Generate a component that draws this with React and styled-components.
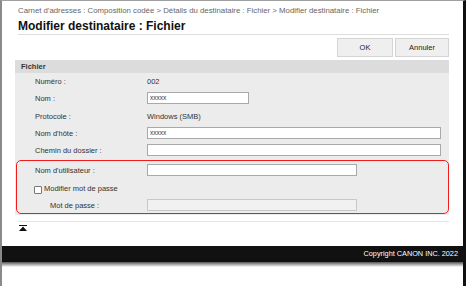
import React from 'react';
import styled, { createGlobalStyle } from 'styled-components';

const GlobalStyle = createGlobalStyle`
    html, body {
        margin: 0;
        padding: 0;
        background: #ffffff;
    }
    body {
        font-family: "Liberation Sans", Arial, sans-serif;
        color: #333;
    }
`

const Frame = styled.div`
    width: 466px;
    height: 286px;
    box-sizing: border-box;
    border-top: 1px solid #a0a0a0;
    border-left: 2px solid #8a8a8a;
    border-right: 3px solid #111;
    display: flex;
    flex-direction: column;
    overflow: hidden;
`

const Main = styled.div`
    padding: 4px 14px 0 16px;
    display: flex;
    flex-direction: column;
`

const Breadcrumb = styled.div`
    font-size: 7.8px;
    color: #666;
    line-height: 12px;
`

const Title = styled.h1`
    margin: 2px 0 0;
    font-size: 12px;
    font-weight: bold;
    color: #111;
    line-height: 15px;
    border-bottom: 1px solid #ddd;
`

const Toolbar = styled.div`
    display: flex;
    justify-content: flex-end;
    gap: 2px;
    padding: 3px 0 3px;
`

const Button = styled.button`
    width: ${({ wide }) => (wide ? '54px' : '56px')};
    height: 19px;
    background: #efefef;
    border: 1px solid #d4d4d4;
    font-family: inherit;
    font-size: 7.5px;
    color: #222;
    padding: 0;
`

const Section = styled.div`
    margin-left: -3px;
    background: #ececec;
`

const SectionHead = styled.div`
    background: #dcdcdc;
    height: 13px;
    line-height: 13px;
    font-size: 7.5px;
    font-weight: bold;
    color: #333;
    padding-left: 6px;
`

const Rows = styled.div`
    padding: 0 8px 1px 20px;
`

const Row = styled.div`
    display: flex;
    align-items: center;
    height: ${({ h }) => h || 18}px;
`

const Label = styled.div`
    width: 112px;
    flex: none;
    font-size: 7.5px;
    color: #333;
    padding-left: ${({ indent }) => indent || 0}px;
    box-sizing: border-box;
`

const Value = styled.div`
    font-size: 7.5px;
    color: #333;
`

const Input = styled.div`
    box-sizing: border-box;
    width: ${({ w }) => w}px;
    height: 12px;
    background: ${({ disabled }) => (disabled ? '#f1f1f1' : '#fff')};
    border: 1px solid ${({ disabled }) => (disabled ? '#c8c8c8' : '#a9a9a9')};
    font-size: 6.5px;
    line-height: 10px;
    padding-left: 2px;
    color: #333;
`

const Highlight = styled.div`
    margin: 1px -8px 0 -19px;
    padding: 1px 7px 2px 18px;
    border: 1px solid #f21b1b;
    border-radius: 5px;
`

const CheckRow = styled.label`
    display: flex;
    align-items: center;
    height: 21px;
    font-size: 7.5px;
    color: #333;
    margin-left: -1px;
`

const Box = styled.span`
    width: 8px;
    height: 8px;
    box-sizing: border-box;
    border: 1px solid #777;
    background: #fff;
    border-radius: 1px;
    margin-right: 2px;
    margin-top: 2px;
`

const Divider = styled.div`
    margin-top: 6px;
    height: 1px;
    background: #e4e4e4;
`

const TopLink = styled.div`
    display: flex;
    padding: 3px 0 0 1px;
    height: 10px;
    svg {
        display: block;
    }
`

const Footer = styled.div`
    margin-top: auto;
    margin-bottom: 24px;
    height: 16px;
    background: #111;
    color: #fff;
    font-size: 7.3px;
    line-height: 16px;
    text-align: right;
    padding-right: 5px;
    position: relative;
    &::after {
        content: '';
        position: absolute;
        left: 0;
        right: 0;
        top: 16px;
        height: 5px;
        background: linear-gradient(#555, #fff);
    }
`

const TopIcon = () => (
    <svg width="8" height="6" viewBox="0 0 8 6">
        <rect x="0" y="0" width="8" height="1" fill="#111" />
        <polygon points="4,1.5 8,6 0,6" fill="#111" />
    </svg>
)

const App = () => {
    return (
        <Frame>
            <GlobalStyle />
            <Main>
                <Breadcrumb>
                    Carnet d'adresses : Composition codée &gt; Détails du destinataire : Fichier &gt; Modifier destinataire : Fichier
                </Breadcrumb>
                <Title>Modifier destinataire : Fichier</Title>
                <Toolbar>
                    <Button>OK</Button>
                    <Button wide>Annuler</Button>
                </Toolbar>
                <Section>
                    <SectionHead>Fichier</SectionHead>
                    <Rows>
                        <Row h={16}>
                            <Label>Numéro :</Label>
                            <Value>002</Value>
                        </Row>
                        <Row h={18}>
                            <Label>Nom :</Label>
                            <Input w={102}>xxxxx</Input>
                        </Row>
                        <Row h={18}>
                            <Label>Protocole :</Label>
                            <Value>Windows (SMB)</Value>
                        </Row>
                        <Row h={16}>
                            <Label>Nom d'hôte :</Label>
                            <Input w={294}>xxxxx</Input>
                        </Row>
                        <Row h={18}>
                            <Label>Chemin du dossier :</Label>
                            <Input w={294} />
                        </Row>
                        <Highlight>
                            <Row h={16}>
                                <Label>Nom d'utilisateur :</Label>
                                <Input w={210} />
                            </Row>
                            <CheckRow>
                                <Box />
                                Modifier mot de passe
                            </CheckRow>
                            <Row h={12}>
                                <Label indent={15}>Mot de passe :</Label>
                                <Input w={210} disabled />
                            </Row>
                        </Highlight>
                    </Rows>
                </Section>
                <Divider />
                <TopLink>
                    <TopIcon />
                </TopLink>
            </Main>
            <Footer>Copyright CANON INC. 2022</Footer>
        </Frame>
    )
}

export default App;
